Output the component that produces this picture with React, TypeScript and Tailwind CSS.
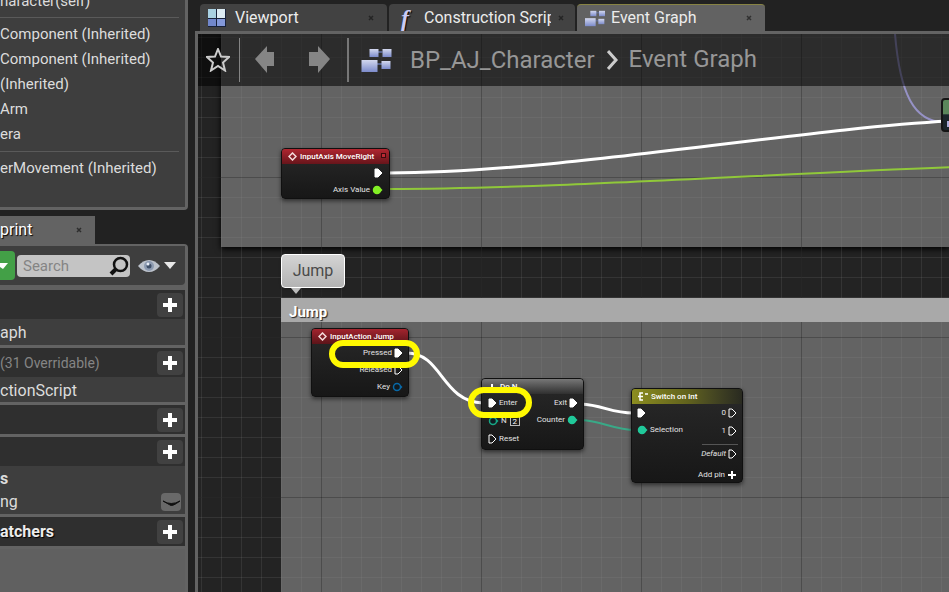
import type { ReactNode } from "react";

const COMPONENTS = ["Component (Inherited)", "Component (Inherited)", "(Inherited)", "Arm", "era"];

function BlocksIcon({ className }: { className: string }) {
  return (
    <svg viewBox="0 0 30 25" className={className} aria-hidden="true">
      <defs>
        <linearGradient id="block" x1="0" y1="0" x2="0" y2="1">
          <stop offset="0" stopColor="#d3d8ee" />
          <stop offset="1" stopColor="#7c8bcb" />
        </linearGradient>
      </defs>
      <path d="M13 4h8M13 16h8" stroke="#6272a8" strokeWidth="1.5" />
      <rect x="8" y="1" width="9" height="8" fill="url(#block)" />
      <rect x="21" y="1" width="9" height="8" fill="url(#block)" />
      <rect x="0" y="12" width="16" height="12" fill="url(#block)" />
      <rect x="20" y="13" width="9" height="8" fill="url(#block)" />
    </svg>
  );
}

function ViewportIcon() {
  return (
    <svg viewBox="0 0 18 18" className="size-[18px]" aria-hidden="true">
      <rect width="18" height="18" fill="#17213a" />
      <rect width="8" height="9" fill="#a9d1e2" />
      <rect x="9" width="8" height="9" fill="#dcebf3" />
      <rect y="10" width="8" height="7" fill="#7187cb" />
      <rect x="9" y="10" width="8" height="7" fill="#8398d9" />
    </svg>
  );
}

function Close({ label, tone }: { label: string; tone: string }) {
  return (
    <button aria-label={label} className={`flex size-3 items-center justify-center ${tone}`}>
      <svg viewBox="0 0 6 6" className="size-1.5" aria-hidden="true">
        <path d="M1 1l4 4M5 1L1 5" stroke="currentColor" strokeWidth="1.5" />
      </svg>
    </button>
  );
}

function Section({ title, label, tone, children }: { title?: string; label: string; tone?: string; children?: ReactNode }) {
  return (
    <section className="border-b-[3px] border-[#636363] bg-[#3e3e3e]">
      <header className="flex h-[29px] items-center justify-between bg-[#2f2f2f] pr-0.5">
        <h3 className={`whitespace-nowrap ${tone ?? ""}`}>{title}</h3>
        <button aria-label={label} className="flex h-6 w-[26px] items-center justify-center rounded-sm bg-[#414141]">
          <svg viewBox="0 0 14 14" className="size-3.5" aria-hidden="true">
            <path d="M7 0v14M0 7h14" stroke="#fff" strokeWidth="4" />
          </svg>
        </button>
      </header>
      {children}
    </section>
  );
}

function Sidebar() {
  return (
    <aside className="flex w-[188px] shrink-0 flex-col overflow-hidden text-base text-[#dcdcdc]">
      <section className="h-[210px] shrink-0 rounded-br-sm border-r-[3px] border-b-[3px] border-[#636363] bg-[#3e3e3e] text-[15px] whitespace-nowrap">
        <div className="mr-1.5 flex h-[18px] items-end border-b border-[#5a5a5a] pb-1">
          <p className="leading-6">haracter(self)</p>
        </div>
        <ul className="mr-1.5 border-b border-[#5a5a5a] pt-1 pb-1">
          {COMPONENTS.map((name, i) => (
            <li key={i} className="h-[25px] leading-[25px]">{name}</li>
          ))}
        </ul>
        <p className="pt-1 leading-[25px]">erMovement (Inherited)</p>
      </section>
      <div className="mt-1.5 flex h-7 w-[95px] shrink-0 items-center justify-between bg-[#636363] pr-2.5 text-white">
        <span className="[text-shadow:1px_1px_1px_#000]">print</span>
        <Close label="Close My Blueprint" tone="text-[#2d2d2d]" />
      </div>
      <div className="flex flex-1 flex-col rounded-tr-sm border-t-2 border-r-[3px] border-[#636363] bg-[#606060]">
        <div className="flex h-[39px] shrink-0 items-center rounded-br-sm bg-[#3e3e3e]">
          <button aria-label="Add New" className="flex h-[29px] w-[15px] items-center rounded-r-sm bg-[#43a047]">
            <svg viewBox="0 0 8 6" className="h-1.5 w-2" aria-hidden="true"><path d="M0 0h8L3 6 0 4z" fill="#fff" /></svg>
          </button>
          <div className="ml-0.5 flex h-[22px] w-[113px] items-center rounded-sm bg-[#c4c4c4] pr-px">
            <input aria-label="Search" placeholder="Search" className="w-0 flex-1 bg-transparent pl-1.5 text-[15px] leading-5 text-[#333] outline-none placeholder:text-[#848484]" />
            <svg viewBox="0 0 20 20" className="size-5" aria-hidden="true">
              <circle cx="11.500" cy="8.500" r="6.500" fill="none" stroke="#111" strokeWidth="2.500" />
              <path d="M7 13l-5 5" stroke="#111" strokeWidth="4" />
            </svg>
          </div>
          <button aria-label="View options" className="ml-2 flex items-center gap-1">
            <svg viewBox="0 0 22 14" className="h-3.5 w-[22px]" aria-hidden="true">
              <path d="M0 7Q5 1 11 1t11 6q-5 6-11 6T0 7z" fill="#bcc2cb" />
              <circle cx="11" cy="7" r="5" fill="#8c9ab0" />
              <circle cx="11" cy="7" r="2.500" fill="#3f4f68" />
              <circle cx="10" cy="5" r="1.500" fill="#e8eef8" />
            </svg>
            <svg viewBox="0 0 12 7" className="h-[7px] w-3" aria-hidden="true"><path d="M0 0h12L6 7z" fill="#e8e8e8" /></svg>
          </button>
        </div>
        <div className="h-[5px] shrink-0" />
        <Section label="Add graph"><p className="h-[26px] leading-7">aph</p></Section>
        <Section title="(31 Overridable)" label="Override function" tone="text-sm text-[#858585]">
          <p className="h-[25px] leading-[27px]">ctionScript</p>
        </Section>
        <Section label="Add macro" />
        <Section label="Add variable">
          <p className="h-[23px] font-bold leading-[25px]">s</p>
          <div className="flex h-[25px] items-center justify-between pr-1">
            <span>ng</span>
            <button aria-label="Toggle visibility" className="flex h-[18px] w-5 items-center justify-center rounded-sm bg-[#696969]">
              <svg viewBox="0 0 18 8" className="h-2 w-[18px]" aria-hidden="true"><path d="M1 3q8 5 17 0-8 6-10 4z" fill="#111" stroke="#111" /></svg>
            </button>
          </div>
        </Section>
        <Section title="atchers" label="Add event dispatcher" tone="font-bold text-[#ececec] [text-shadow:1px_1px_1px_#000]" />
      </div>
    </aside>
  );
}

function Tabs() {
  return (
    <nav className="flex h-[27px] gap-0.5 pl-[5px] text-base text-[#ececec] [text-shadow:1px_1px_1px_#000]">
      <div className="flex w-[187px] items-center rounded-t-sm bg-[#424242] pr-2.5 pl-2">
        <ViewportIcon />
        <button className="ml-[9px] flex-1 text-left">Viewport</button>
        <Close label="Close Viewport" tone="text-[#242424]" />
      </div>
      <div className="flex w-[186px] items-center rounded-t-sm bg-[#424242] pr-2 pl-2">
        <span className="w-4 text-center font-['Liberation_Serif',serif] text-2xl leading-6 font-bold text-[#c9caf5] italic" aria-hidden="true">f</span>
        <button className="ml-[11px] w-[127px] overflow-hidden text-left whitespace-nowrap">Construction Script</button>
        <span className="ml-auto"><Close label="Close Construction Script" tone="text-[#242424]" /></span>
      </div>
      <div className="flex w-[188px] items-center rounded-t-sm border-t border-[#878344] bg-[#626262] pr-2.5 pl-2">
        <BlocksIcon className="h-[17px] w-5" />
        <button className="ml-1.5 flex-1 text-left">Event Graph</button>
        <Close label="Close Event Graph" tone="text-[#303030]" />
      </div>
    </nav>
  );
}

function Breadcrumbs() {
  return (
    <div className="relative flex h-[52px] items-center bg-black/55 text-[#979797]">
      <button aria-label="Favorite" className="ml-2 flex size-6 items-center justify-center">
        <svg viewBox="0 0 24 24" className="size-6" aria-hidden="true">
          <path d="M12 1l3 7.500 8 .5-6 5.500 2 8L12 18l-7 4.500 2-8L1 9l8-.5z" fill="none" stroke="#ccc" strokeWidth="2" />
        </svg>
      </button>
      <span className="ml-[9px] h-11 w-px bg-[#858585]" />
      <button aria-label="Back" className="ml-3.5">
        <svg viewBox="0 0 22 28" className="h-7 w-[22px]" aria-hidden="true"><path d="M1 13L13 0v6h7v14h-7v7z" fill="#858585" /></svg>
      </button>
      <button aria-label="Forward" className="ml-8">
        <svg viewBox="0 0 22 28" className="h-7 w-[22px]" aria-hidden="true"><path d="M22 13L10 0v6H1v14h9v7z" fill="#858585" /></svg>
      </button>
      <span className="ml-[17px] h-11 w-0.5 bg-[#777]" />
      <BlocksIcon className="ml-3 h-[25px] w-[31px]" />
      <a href="#character" className="ml-[18px] text-2xl">BP_AJ_Character</a>
      <svg viewBox="0 0 12 20" className="ml-3 h-5 w-3" aria-hidden="true"><path d="M1 1l8 9-8 9" fill="none" stroke="#ccc" strokeWidth="3" /></svg>
      <a href="#event-graph" className="ml-2.5 pb-[3px] text-2xl">Event Graph</a>
    </div>
  );
}

function ExecPin({ filled = false }: { filled?: boolean }) {
  return (
    <svg viewBox="0 0 9 10" className="h-2.5 w-[9px] shrink-0" aria-hidden="true">
      <path d="M1 1h3l4 4-4 4H1z" fill={filled ? "#fff" : "none"} stroke="#fff" />
    </svg>
  );
}

function DataPin({ color, filled = false }: { color: string; filled?: boolean }) {
  return (
    <svg viewBox="0 0 11 10" className="h-2.5 w-[11px] shrink-0" aria-hidden="true">
      <circle cx="5" cy="5" r="3.500" fill={filled ? color : "#101a20"} stroke={color} strokeWidth="1.500" />
      <path d="M8.500 3l2 2-2 2z" fill={color} />
    </svg>
  );
}

function Node({ place, title, header, icon, children }: { place: string; title: string; header: string; icon: ReactNode; children: ReactNode }) {
  return (
    <article className={`absolute overflow-hidden rounded-sm border border-[#101010] bg-linear-to-b from-[#292929] to-[#171717] text-[8px] leading-[10px] text-[#e4e4e4] shadow-[0_2px_4px_#0008] ${place}`}>
      <header className={`flex h-[15px] items-center gap-[3px] pl-1.5 font-medium text-white ${header}`}>
        {icon}
        <h2 className="whitespace-nowrap">{title}</h2>
      </header>
      {children}
    </article>
  );
}

function Diamond() {
  return <svg viewBox="0 0 9 9" className="size-[9px]" aria-hidden="true"><path d="M4.500 1L8 4.500 4.500 8 1 4.500z" fill="none" stroke="#f4dada" strokeWidth="1.500" /></svg>;
}

function Canvas() {
  return (
    <div className="absolute inset-0 overflow-hidden bg-[#232323]">
      <div className="absolute top-0 right-0 left-[23px] h-[213px] bg-[#636363] shadow-[0_2px_6px_#000]" />
      <section className="absolute top-[264px] right-0 bottom-0 left-[83px] bg-[#636363]">
        <h2 className="h-6 bg-[#a9a9a9] pl-2 text-[15px] leading-7 font-bold text-white [text-shadow:1px_1px_1px_#222]">Jump</h2>
      </section>
      <svg className="absolute inset-0 size-full" aria-hidden="true">
        <defs>
          <pattern id="minor" x="3" y="3" width="20" height="20" patternUnits="userSpaceOnUse">
            <path d="M.5 0v20M0 .5h20" stroke="#909090" strokeOpacity=".16" />
          </pattern>
          <pattern id="major" x="123" y="143" width="160" height="160" patternUnits="userSpaceOnUse">
            <path d="M.5 0v160M0 .5h160" stroke="#000" strokeOpacity=".28" />
          </pattern>
        </defs>
        <rect width="100%" height="264" fill="url(#minor)" />
        <rect y="288" width="100%" height="100%" fill="url(#minor)" />
        <rect y="264" width="83" height="24" fill="url(#minor)" />
        <rect width="100%" height="264" fill="url(#major)" />
        <rect y="288" width="100%" height="100%" fill="url(#major)" />
        <g fill="none" strokeLinecap="round">
          <path d="M697 0C702 60 716 88 746 88" stroke="#9692c6" strokeWidth="2" />
          <path d="M190 139C360 139 600 95 751 87" stroke="#fff" strokeWidth="3" />
          <path d="M190 155C350 155 570 140 760 133" stroke="#90c83a" strokeWidth="2" />
          <path d="M209 319C244 319 244 368 285 369" stroke="#fff" strokeWidth="3" />
          <path d="M383 370C405 371 415 380 438 379" stroke="#fff" strokeWidth="3" />
          <path d="M383 386C405 387 415 396 438 396" stroke="#39a987" strokeWidth="2" />
        </g>
      </svg>

      <div className="absolute top-[220px] left-[83px] flex h-[34px] w-16 items-center justify-center rounded-sm border border-white bg-linear-to-b from-[#d4d4d4] to-[#b3b3b3] text-base text-[#4a4a4a] shadow">Jump</div>
      <svg viewBox="0 0 10 6" className="absolute top-[254px] left-[93px] h-1.5 w-2.5" aria-hidden="true"><path d="M0 0h10L5 6z" fill="#bbb" /></svg>

      <Node place="left-[83px] top-[114px] h-[51px] w-[109px]" title="InputAxis MoveRight" header="bg-linear-to-b from-[#b02630] to-[#67151b]" icon={<Diamond />}>
        <span className="absolute top-1 right-[3px] size-[5px] border border-[#380c0e] bg-[#bd2933]" />
        <div className="flex flex-col items-end gap-[7px] pt-1 pr-1.5">
          <ExecPin filled />
          <div className="flex items-center gap-0.5">Axis Value <DataPin color="#83ef25" filled /></div>
        </div>
      </Node>
      <Node place="left-[113px] top-[294px] h-[69px] w-[98px]" title="InputAction Jump" header="bg-linear-to-b from-[#a3242e] to-[#5c1419]" icon={<Diamond />}>
        <div className="flex flex-col items-end gap-[7px] pt-1 pr-[5px]">
          <div className="flex items-center gap-0.5">Pressed <ExecPin filled /></div>
          <div className="flex items-center gap-0.5">Released <ExecPin /></div>
          <div className="flex items-center gap-0.5">Key <DataPin color="#0868a7" /></div>
        </div>
      </Node>
      <Node
        place="left-[283px] top-[344px] h-[72px] w-[103px]"
        title="Do N"
        header="bg-linear-to-b from-[#777] to-[#303030]"
        icon={<svg viewBox="0 0 9 9" className="size-[9px]" aria-hidden="true"><path d="M4 2v3M1 7h7" stroke="#fff" strokeWidth="2" /></svg>}
      >
        <div className="flex justify-between pt-1 pr-[5px] pl-1.5">
          <div className="flex flex-col gap-2">
            <div className="flex items-center gap-0.5"><ExecPin filled /> Enter</div>
            <label className="flex items-center gap-0.5"><DataPin color="#17a684" /> N <input aria-label="N" defaultValue="2" className="ml-px h-2.5 w-2.5 border border-[#bbb] bg-transparent text-center leading-2 text-white" /></label>
            <div className="flex items-center gap-0.5"><ExecPin /> Reset</div>
          </div>
          <div className="flex flex-col items-end gap-[7px]">
            <div className="flex items-center gap-0.5">Exit <ExecPin filled /></div>
            <div className="flex items-center gap-0.5">Counter <DataPin color="#20c99a" filled /></div>
          </div>
        </div>
      </Node>
      <Node
        place="left-[433px] top-[354px] h-[95px] w-[112px]"
        title="Switch on Int"
        header="bg-linear-to-r from-[#8c8d20] via-[#62631d] to-[#292a20]"
        icon={<svg viewBox="0 0 10 9" className="h-[9px] w-2.5" aria-hidden="true"><path d="M5 1H2v7h3M0 4.500h5M7 2h3" fill="none" stroke="#fff" strokeWidth="1.500" /></svg>}
      >
        <div className="flex justify-between pt-1 pr-[5px] pl-[5px]">
          <div className="flex flex-col gap-[7px]">
            <ExecPin filled />
            <div className="flex items-center gap-0.5"><DataPin color="#20c99a" filled /> Selection</div>
          </div>
          <div className="flex flex-col items-end gap-2">
            <div className="flex items-center gap-0.5">0 <ExecPin /></div>
            <div className="flex items-center gap-0.5">1 <ExecPin /></div>
          </div>
        </div>
        <hr className="mt-2 mr-1 ml-auto w-9 border-[#555]" />
        <div className="flex items-center justify-end gap-0.5 pt-1 pr-[5px] italic">Default <ExecPin /></div>
        <button className="mt-[11px] ml-auto flex items-center gap-[3px] pr-1.5">
          Add pin
          <svg viewBox="0 0 8 8" className="size-2" aria-hidden="true"><path d="M4 0v8M0 4h8" stroke="#fff" strokeWidth="2" /></svg>
        </button>
      </Node>
      <div className="absolute top-16 left-[743px] h-[34px] w-5 rounded-sm border-2 border-[#151515] bg-linear-to-b from-[#5b865b] from-45% to-[#1b252b] to-50%">
        <span className="absolute top-[21px] left-1 size-1.5 bg-[#aaaad8]" />
      </div>
      <div className="absolute top-[306px] left-[131px] h-7 w-[91px] rounded-full border-6 border-[#fff900]" />
      <div className="absolute top-[353px] left-[270px] h-[31px] w-16 rounded-full border-6 border-[#fff900]" />
    </div>
  );
}

export default function App() {
  return (
    <div className="flex h-screen overflow-hidden bg-[#222] font-['Roboto',sans-serif]">
      <Sidebar />
      <main className="ml-[7px] flex min-w-0 flex-1 flex-col pt-1">
        <Tabs />
        <div className="relative flex-1 border-t-[3px] border-l-[3px] border-[#636363]">
          <Canvas />
          <Breadcrumbs />
        </div>
      </main>
    </div>
  );
}
